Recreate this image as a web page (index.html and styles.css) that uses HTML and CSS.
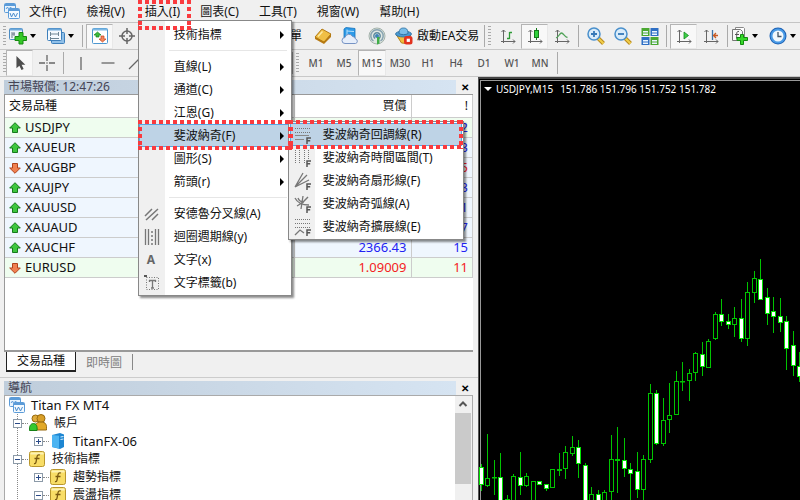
FILE: index.html
```
<!DOCTYPE html>
<html lang="zh-Hant">
<head>
<meta charset="utf-8">
<title>Titan FX MT4</title>
<link rel="stylesheet" href="styles.css">
</head>
<body>
<svg class="defs" aria-hidden="true">
  <defs>
    <symbol id="app" viewBox="0 0 16 16">
      <rect x=".5" y=".5" width="11" height="9" rx="1" fill="#e8f3fd" stroke="#5b9bd8"/>
      <path d="M1 2h10" stroke="#5b9bd8" stroke-width="2"/>
      <path d="M2 6l1.500-2 1.500 3 1.500-3 1.500 2" fill="none" stroke="#5b9bd8"/>
      <rect x="4.500" y="5.500" width="11" height="10" rx="1" fill="#f4faff" stroke="#5b9bd8"/>
      <path d="M5 7h10" stroke="#5b9bd8" stroke-width="2"/>
      <path d="M6 10l1.500 4 2-4 2 4 2-4" fill="none" stroke="#4a8ccc"/>
    </symbol>
    <symbol id="newchart" viewBox="0 0 18 18">
      <rect x=".5" y="1.500" width="13" height="11" rx="1" fill="#eef6fd" stroke="#4d8dc4"/>
      <path d="M1 2.500h12" stroke="#6fa9da" stroke-width="2"/>
      <path d="M3 11V5M3 7h3M5 5v4" stroke="#6d7d8c" fill="none"/>
      <path d="M10 5.500h4v4h3.500v4H14v3.500h-4v-3.500H6v-4h4z" fill="#35c828" stroke="#158a10"/>
    </symbol>
    <symbol id="profiles" viewBox="0 0 18 18">
      <rect x="4.500" y="5.500" width="13" height="11" rx="1" fill="#8fbfe8" stroke="#3d7fbb"/>
      <rect x=".5" y="1.500" width="14" height="12" rx="1" fill="#f4f9fe" stroke="#3d7fbb"/>
      <path d="M1 2.500h13" stroke="#6fa9da" stroke-width="2"/>
      <path d="M3.500 5v4M3.500 7h8M11.500 5v4M3 11.500h9M3.500 10v3" stroke="#6d8494" fill="none"/>
    </symbol>
    <symbol id="market" viewBox="0 0 16 16">
      <rect x=".5" y=".5" width="15" height="15" rx="1" fill="#fff" stroke="#4d97d0"/>
      <path d="M1 1.500h14" stroke="#7db8e4" stroke-width="2"/>
      <path d="M5.500 4L9 7H7v2H4V7H2z" fill="#3cb93a" stroke="#15841a" stroke-width=".7"/>
      <path d="M10.500 14L7 11h2V8h3v3h2z" fill="#f4875a" stroke="#c4411a" stroke-width=".7"/>
    </symbol>
    <symbol id="cross" viewBox="0 0 16 16">
      <circle cx="8" cy="8" r="5" fill="none" stroke="#666" stroke-width="1.500"/>
      <path d="M8 0v6M8 10v6M0 8h6M10 8h6" stroke="#666" stroke-width="1.500"/>
    </symbol>
    <symbol id="gold" viewBox="0 0 18 18">
      <path d="M1 10l7-8 9 5v3l-7 7-9-5z" fill="#b87a12"/>
      <path d="M1 10l7-8 9 5-7 8z" fill="#f0bf45" stroke="#a8700e" stroke-width=".8"/>
      <path d="M4 9.500L8.500 4.500" stroke="#fdeaa5" stroke-width="1.500"/>
    </symbol>
    <symbol id="cloud" viewBox="0 0 18 18">
      <path d="M3 2l2-1.500 9 1V11H3z" fill="#2f9be8" stroke="#1573bd" stroke-width=".8"/>
      <path d="M6 2.500v8M6 4l7 .5" stroke="#b7e0fb"/>
      <path d="M4 16.500a3 3 0 010-6 4 4 0 017.500-1 3 3 0 013 2.500 2.300 2.300 0 010 4.500z" fill="#e6eefa" stroke="#7693c4"/>
    </symbol>
    <symbol id="signal" viewBox="0 0 18 18">
      <circle cx="9" cy="9" r="8" fill="#dfe7e2" stroke="#a4b2ab"/>
      <path d="M5.500 14a6.200 6.200 0 117 0" fill="none" stroke="#88a3b0" stroke-width="1.500"/>
      <path d="M7 11.500a3.200 3.200 0 114 0" fill="none" stroke="#5f8aa0" stroke-width="1.500"/>
      <circle cx="9" cy="9" r="2" fill="#3c82b8"/>
      <path d="M9 10h2.500v6.500L9 17.500z" fill="#3fae46"/>
    </symbol>
    <symbol id="ea" viewBox="0 0 18 18">
      <path d="M1.500 8h14l-3.500 8.500-5.500-.5z" fill="#f2bd3e" stroke="#b4821a"/>
      <ellipse cx="8.500" cy="7" rx="8" ry="3" fill="#4a9ad2" stroke="#27699c" stroke-width=".8"/>
      <path d="M4 6.500C4 2 6 1 8.500 1S13 2 13 6.500c-2 1.500-7 1.500-9 0z" fill="#79bde8" stroke="#27699c" stroke-width=".8"/>
      <rect x="9" y="9" width="8.500" height="8.500" rx="2.500" fill="#e2321e"/>
      <rect x="11.700" y="11.700" width="3.200" height="3.200" fill="#fff"/>
    </symbol>
    <symbol id="bars" viewBox="0 0 16 16">
      <path d="M3.500 2v13M1 13.500h14M1.500 4l2-2 2 2M13 11.500l2 2-2 2" fill="none" stroke="#666"/>
      <path d="M9.500 4v7M9.500 4.500H12M7 10.500h2.500" fill="none" stroke="#2d9a35" stroke-width="1.300"/>
    </symbol>
    <symbol id="candles" viewBox="0 0 16 16">
      <path d="M3.500 2v13M1 13.500h14M1.500 4l2-2 2 2M13 11.500l2 2-2 2" fill="none" stroke="#666"/>
      <path d="M9.500 0v12" stroke="#147a1a"/>
      <rect x="7.500" y="2.500" width="4" height="7" fill="#2fd23a" stroke="#147a1a"/>
    </symbol>
    <symbol id="line" viewBox="0 0 16 16">
      <path d="M3.500 2v13M1 13.500h14M1.500 4l2-2 2 2M13 11.500l2 2-2 2" fill="none" stroke="#666"/>
      <path d="M2 10c3-1 3.500-5 5.500-5s3 4 6 4.500" fill="none" stroke="#4fa257" stroke-width="1.300"/>
    </symbol>
    <symbol id="zoomin" viewBox="0 0 18 18">
      <path d="M11 11l5.500 5.500" stroke="#b88a20" stroke-width="4"/><path d="M11 11l5.500 5.500" stroke="#f2cf4a" stroke-width="2"/>
      <circle cx="7" cy="7" r="6" fill="#d9ecfa" stroke="#4a90cc" stroke-width="1.500"/>
      <path d="M4 7h6M7 4v6" stroke="#3579b8" stroke-width="1.800"/>
    </symbol>
    <symbol id="zoomout" viewBox="0 0 18 18">
      <path d="M11 11l5.500 5.500" stroke="#b88a20" stroke-width="4"/><path d="M11 11l5.500 5.500" stroke="#f2cf4a" stroke-width="2"/>
      <circle cx="7" cy="7" r="6" fill="#d9ecfa" stroke="#4a90cc" stroke-width="1.500"/>
      <path d="M4 7h6" stroke="#3579b8" stroke-width="1.800"/>
    </symbol>
    <symbol id="tile" viewBox="0 0 18 18">
      <path d="M.5 1h8v8h-8z" fill="#4ba832"/><path d="M9.500 1h8v8h-8z" fill="#2f6fc4"/>
      <path d="M.5 10h8v8h-8z" fill="#2f6fc4"/><path d="M9.500 10h8v8h-8z" fill="#4ba832"/>
      <path d="M2 4h5v1.500H2zM2 6.500h5V8H2zM11 4h5v1.500h-5zM11 6.500h5V8h-5zM2 13h5v1.500H2zM2 15.500h5V17H2zM11 13h5v1.500h-5zM11 15.500h5V17h-5z" fill="#eaf4ff"/>
    </symbol>
    <symbol id="scroll" viewBox="0 0 16 16">
      <path d="M3.500 2v13M1 13.500h14M1.500 4l2-2 2 2M13 11.500l2 2-2 2" fill="none" stroke="#666"/>
      <path d="M8 4l4.500 3.500L8 11z" fill="#3ccf46" stroke="#148a1e" stroke-width=".8"/>
    </symbol>
    <symbol id="shift" viewBox="0 0 16 16">
      <path d="M3.500 2v13M1 13.500h14M1.500 4l2-2 2 2M13 11.500l2 2-2 2" fill="none" stroke="#666"/>
      <path d="M9.500 2v10" stroke="#3b72a8" stroke-width="1.300"/>
      <path d="M15 7.500h-4M13 5l-2.500 2.500L13 10" fill="none" stroke="#c85a22" stroke-width="1.300"/>
    </symbol>
    <symbol id="template" viewBox="0 0 18 18">
      <path d="M4.500 3.500V.5h8l1 1v11h-3" fill="#fff" stroke="#888"/>
      <path d="M1.500 2.500h8l2 2v9h-10z" fill="#f8f8f8" stroke="#777"/>
      <path d="M8 4.500c-3-.5-2 2-2.500 7M4 7.500h4" stroke="#555" fill="none"/>
      <path d="M9.500 7.500h3v3h4v3h-4v4h-3v-4h-3.500v-3h3.500z" fill="#35d828" stroke="#128a10"/>
    </symbol>
    <symbol id="clock" viewBox="0 0 18 18">
      <circle cx="9" cy="9" r="8.500" fill="#1d62b5"/><circle cx="9" cy="9" r="7.500" fill="#4a9be6"/>
      <circle cx="9" cy="9" r="5.500" fill="#f2f8fd"/>
      <path d="M9 5v4.500h3.500" fill="none" stroke="#456" stroke-width="1.300"/>
    </symbol>
    <symbol id="pointer" viewBox="0 0 16 18">
      <path d="M4 1v14l3.300-3 2.400 5 2.400-1.200L9.800 11H14z" fill="#4d4d4d"/>
    </symbol>
    <symbol id="crosshair" viewBox="0 0 16 16">
      <path d="M8 0v6M8 10v6M0 8h6M10 8h6" stroke="#666" stroke-width="1.300"/><circle cx="8" cy="8" r=".8" fill="#666"/>
    </symbol>
    <symbol id="vline" viewBox="0 0 16 16"><path d="M8 2v13" stroke="#666" stroke-width="1.300"/></symbol>
    <symbol id="hline" viewBox="0 0 16 16"><path d="M1.500 8h13" stroke="#666" stroke-width="1.300"/></symbol>
    <symbol id="tline" viewBox="0 0 16 16"><path d="M2 14L14 2" stroke="#666" stroke-width="1.300"/></symbol>
    <symbol id="up" viewBox="0 0 12 12">
      <path d="M6 .7L11.300 6H8.500v4.500h-5V6H.7z" fill="#3fc63f" stroke="#167a1c"/>
    </symbol>
    <symbol id="down" viewBox="0 0 12 12">
      <path d="M6 11.300L.7 6h2.800V1.500h5V6h2.800z" fill="#f08050" stroke="#b0431c"/>
    </symbol>
    <symbol id="pitchfork" viewBox="0 0 16 16"><path d="M1 10L8 3M2 14L14 3M8 14l6-6" stroke="#777" stroke-width="1.500"/></symbol>
    <symbol id="cycle" viewBox="0 0 16 16">
      <path d="M1.500 0v16M4.500 0v16M11.500 0v16M14.500 0v16" stroke="#777" stroke-width="1.300"/><path d="M8 2v14" stroke="#777" stroke-width="1.500" stroke-dasharray="2 2"/>
    </symbol>
    <symbol id="label" viewBox="0 0 16 16">
      <rect x="2.500" y="2.500" width="12" height="12" fill="none" stroke="#777" stroke-dasharray="1 1.500"/>
      <path d="M5 5.500h7M8.500 5.500V13M7 13h3M5.500 5v2M11.500 5v2" stroke="#777" stroke-width="1.300"/><path d="M0 1h3" stroke="#555" stroke-width="2"/>
    </symbol>
    <symbol id="eff" viewBox="0 0 6 7"><path d="M1 7V1h4M1 3.800h3.200" fill="none" stroke="#555" stroke-width="1.500"/></symbol>
    <symbol id="fretr" viewBox="0 0 18 18">
      <path d="M1 2.500h15M1 6.500h15" stroke="#777" stroke-dasharray="1 1"/><path d="M1 9.500h14M1 13.500h9" stroke="#888"/>
      <use href="#eff" x="12" y="11" width="6" height="7"/>
    </symbol>
    <symbol id="ftime" viewBox="0 0 18 18">
      <path d="M1.500 1v13M5.500 1v13M10.500 1v13M14.500 1v9" stroke="#777" stroke-dasharray="1 1"/>
      <use href="#eff" x="12" y="11" width="6" height="7"/>
    </symbol>
    <symbol id="ffan" viewBox="0 0 18 18">
      <path d="M1 15L9 1M1 15L13 3M1 15L15 8" stroke="#777" stroke-width="1.300"/>
      <use href="#eff" x="12" y="11" width="6" height="7"/>
    </symbol>
    <symbol id="farc" viewBox="0 0 18 18">
      <path d="M1 3c3 6 9 7 14 7M4 3c1 3 3 4 6 4M3 11c4-2 7-4 11-9M9 1L7 14" fill="none" stroke="#777" stroke-width="1.300"/>
      <use href="#eff" x="12" y="11" width="6" height="7"/>
    </symbol>
    <symbol id="fexp" viewBox="0 0 18 18">
      <path d="M1 1.500h16M1 5.500h16M1 9.500h16" stroke="#777" stroke-dasharray="1 1"/><path d="M1 17l5-5 4 3" fill="none" stroke="#777" stroke-width="1.300"/>
      <use href="#eff" x="12" y="11" width="6" height="7"/>
    </symbol>
    <symbol id="users" viewBox="0 0 18 18">
      <circle cx="6.500" cy="4.500" r="3.500" fill="#e0ac3c" stroke="#96690f"/>
      <circle cx="12" cy="4.500" r="4" fill="#d99f28" stroke="#96690f"/>
      <path d="M6 16c-1-5 1-8 6-8s6 3 5.500 8z" fill="#e2a928" stroke="#96690f"/>
      <path d="M.5 16.500c-.5-4 1-7 4-7s4 3 3.500 7z" fill="#35c82e" stroke="#158015"/>
    </symbol>
    <symbol id="server" viewBox="0 0 16 16">
      <path d="M2 2l8-2 4 1.500V14l-4 2-8-2z" fill="#1d86d2"/><path d="M2 2l7 .8V15.500L2 14z" fill="#4cb4f2"/>
      <path d="M10.500 4l3-.5M10.500 6.500l3-.5" stroke="#d8f0ff"/>
    </symbol>
    <symbol id="func" viewBox="0 0 16 16">
      <rect x=".5" y=".5" width="15" height="15" rx="2" fill="#f8dd66" stroke="#b8962c"/>
      <path d="M1.500 2.500h13" stroke="#fdf2b4" stroke-width="2"/>
      <path d="M11 4c-3-1-3 1.500-3.500 4.500S7 13 5 12.500M5.500 7.500h5" fill="none" stroke="#7a5a10" stroke-width="1.300"/>
    </symbol>
  </defs>
</svg>

<nav class="menubar">
  <svg class="i16"><use href="#app"/></svg>
  <ul class="menus">
    <li><button>文件(F)</button></li>
    <li><button>檢視(V)</button></li>
    <li class="open">
      <button>插入(I)</button>
      <span class="mark mark-title"></span>
      <ul class="popup main-popup">
        <li><button><span class="gut"></span>技術指標<i class="more"></i></button></li>
        <li class="rule"></li>
        <li><button><span class="gut"></span>直線(L)<i class="more"></i></button></li>
        <li><button><span class="gut"></span>通道(C)<i class="more"></i></button></li>
        <li><button><span class="gut"></span>江恩(G)<i class="more"></i></button></li>
        <li class="open">
          <button class="hot"><span class="gut"></span>斐波納奇(F)<i class="more"></i></button>
          <span class="mark mark-item"></span>
          <ul class="popup sub-popup">
            <li class="open"><button class="hot"><span class="gut"><svg class="i18"><use href="#fretr"/></svg></span>斐波納奇回調線(R)</button><span class="mark mark-sub"></span></li>
            <li><button><span class="gut"><svg class="i18"><use href="#ftime"/></svg></span>斐波納奇時間區間(T)</button></li>
            <li><button><span class="gut"><svg class="i18"><use href="#ffan"/></svg></span>斐波納奇扇形線(F)</button></li>
            <li><button><span class="gut"><svg class="i18"><use href="#farc"/></svg></span>斐波納奇弧線(A)</button></li>
            <li><button><span class="gut"><svg class="i18"><use href="#fexp"/></svg></span>斐波納奇擴展線(E)</button></li>
          </ul>
        </li>
        <li><button><span class="gut"></span>圖形(S)<i class="more"></i></button></li>
        <li><button><span class="gut"></span>箭頭(r)<i class="more"></i></button></li>
        <li class="rule"></li>
        <li><button><span class="gut"><svg class="i16"><use href="#pitchfork"/></svg></span>安德魯分叉線(A)</button></li>
        <li><button><span class="gut"><svg class="i16"><use href="#cycle"/></svg></span>迴圈週期線(y)</button></li>
        <li><button><span class="gut"><b>A</b></span>文字(x)</button></li>
        <li><button><span class="gut"><svg class="i16"><use href="#label"/></svg></span>文字標籤(b)</button></li>
      </ul>
    </li>
    <li><button>圖表(C)</button></li>
    <li><button>工具(T)</button></li>
    <li><button>視窗(W)</button></li>
    <li><button>幫助(H)</button></li>
  </ul>
</nav>

<div class="bar main-tools">
  <i class="grip"></i>
  <button class="drop" aria-label="新圖表"><svg class="i18"><use href="#newchart"/></svg><i class="caret"></i></button>
  <button class="drop" aria-label="配置"><svg class="i18"><use href="#profiles"/></svg><i class="caret"></i></button>
  <i class="sep"></i>
  <div class="windows">
    <button class="tool on" aria-label="市場報價"><svg class="i16"><use href="#market"/></svg></button>
    <button class="tool" aria-label="十字"><svg class="i16"><use href="#cross"/></svg></button>
    <button class="order">新訂單</button>
  </div>
  <button class="tool" aria-label="編輯器"><svg class="i18"><use href="#gold"/></svg></button>
  <button class="tool" aria-label="雲端"><svg class="i18"><use href="#cloud"/></svg></button>
  <button class="tool" aria-label="訊號"><svg class="i18"><use href="#signal"/></svg></button>
  <button class="ea"><svg class="i18"><use href="#ea"/></svg>啟動EA交易</button>
  <i class="sep"></i>
  <i class="grip"></i>
  <button class="tool" aria-label="柱狀圖"><svg class="i16"><use href="#bars"/></svg></button>
  <button class="tool on" aria-label="陰陽燭"><svg class="i16"><use href="#candles"/></svg></button>
  <button class="tool" aria-label="折線圖"><svg class="i16"><use href="#line"/></svg></button>
  <i class="sep"></i>
  <button class="tool" aria-label="放大"><svg class="i18"><use href="#zoomin"/></svg></button>
  <button class="tool" aria-label="縮小"><svg class="i18"><use href="#zoomout"/></svg></button>
  <button class="tool" aria-label="排列"><svg class="i18"><use href="#tile"/></svg></button>
  <i class="sep"></i>
  <button class="tool on" aria-label="自動捲動"><svg class="i16"><use href="#scroll"/></svg></button>
  <button class="tool" aria-label="圖表平移"><svg class="i16"><use href="#shift"/></svg></button>
  <i class="sep"></i>
  <button class="drop" aria-label="模板"><svg class="i18"><use href="#template"/></svg><i class="caret"></i></button>
  <button class="drop" aria-label="時間週期"><svg class="i18"><use href="#clock"/></svg><i class="caret"></i></button>
</div>

<div class="bar draw-tools">
  <div class="drawing">
    <i class="grip"></i>
    <button class="tool on" aria-label="游標"><svg class="i16"><use href="#pointer"/></svg></button>
    <button class="tool" aria-label="十字準線"><svg class="i16"><use href="#crosshair"/></svg></button>
    <i class="sep"></i>
    <button class="tool" aria-label="垂直線"><svg class="i16"><use href="#vline"/></svg></button>
    <button class="tool" aria-label="水平線"><svg class="i16"><use href="#hline"/></svg></button>
    <button class="tool" aria-label="趨勢線"><svg class="i16"><use href="#tline"/></svg></button>
  </div>
  <i class="sep"></i>
  <i class="grip"></i>
  <div class="frames">
    <button>M1</button><button>M5</button><button class="on">M15</button><button>M30</button><button>H1</button><button>H4</button><button>D1</button><button>W1</button><button>MN</button>
  </div>
  <i class="sep"></i>
</div>

<main>
  <aside>
    <section class="watch">
      <header><h2>市場報價: 12:47:26</h2><button aria-label="關閉">✕</button></header>
      <div class="quotes">
        <table>
          <thead><tr><th class="sym">交易品種</th><th class="bid">賣價</th><th class="ask">買價</th><th>!</th></tr></thead>
          <tbody>
            <tr class="alt up"><td><svg class="i12"><use href="#up"/></svg>USDJPY</td><td>151.782</td><td>151.794</td><td>12</td></tr>
            <tr class="up"><td><svg class="i12"><use href="#up"/></svg>XAUEUR</td><td>2180.11</td><td>2180.44</td><td>33</td></tr>
            <tr class="dn"><td><svg class="i12"><use href="#down"/></svg>XAUGBP</td><td>1866.32</td><td>1866.57</td><td>25</td></tr>
            <tr class="up"><td><svg class="i12"><use href="#up"/></svg>XAUJPY</td><td>361105</td><td>361138</td><td>33</td></tr>
            <tr class="up"><td><svg class="i12"><use href="#up"/></svg>XAUUSD</td><td>2379.12</td><td>2379.33</td><td>21</td></tr>
            <tr class="up"><td><svg class="i12"><use href="#up"/></svg>XAUAUD</td><td>3590.40</td><td>3590.67</td><td>27</td></tr>
            <tr class="up"><td><svg class="i12"><use href="#up"/></svg>XAUCHF</td><td>2366.28</td><td>2366.43</td><td>15</td></tr>
            <tr class="alt dn"><td><svg class="i12"><use href="#down"/></svg>EURUSD</td><td>1.08998</td><td>1.09009</td><td>11</td></tr>
          </tbody>
        </table>
      </div>
      <div class="tabs"><button class="current">交易品種</button><button>即時圖</button></div>
    </section>
    <section class="navigator">
      <header><h2>導航</h2><button aria-label="關閉">✕</button></header>
      <div class="treebox">
        <div class="tree">
          <div class="node root"><svg class="i16"><use href="#app"/></svg><span class="latin">Titan FX MT4</span></div>
          <ul>
            <li><div class="node"><i class="tog"></i><svg class="i18"><use href="#users"/></svg>帳戶</div>
              <ul><li><div class="node"><i class="tog plus"></i><svg class="i16"><use href="#server"/></svg><span class="latin">TitanFX-06</span></div></li></ul>
            </li>
            <li><div class="node"><i class="tog"></i><svg class="i16"><use href="#func"/></svg>技術指標</div>
              <ul>
                <li><div class="node"><i class="tog plus"></i><svg class="i16"><use href="#func"/></svg>趨勢指標</div></li>
                <li><div class="node"><i class="tog"></i><svg class="i16"><use href="#func"/></svg>震盪指標</div></li>
              </ul>
            </li>
          </ul>
        </div>
        <div class="scroll"><svg class="i16" viewBox="0 0 16 16"><path d="M4.500 10L8 6.500 11.500 10" fill="none" stroke="#555" stroke-width="2"/></svg><i></i></div>
      </div>
    </section>
  </aside>
  <section class="chart">
    <p><i class="tri"></i><span>USDJPY,M15</span><span>151.786 151.796 151.752 151.782</span></p>
    <svg id="plot" aria-label="USDJPY M15"></svg>
  </section>
</main>
<script src="chart.js"></script>
</body>
</html>
```
FILE: styles.css
```
* { box-sizing: border-box; }
html, body { height: 100%; }
body {
  margin: 0;
  display: flex;
  flex-direction: column;
  overflow: hidden;
  background: #f0f0f0;
  color: #111;
  font: 12px/18px "Noto Sans", "Noto Sans CJK TC", sans-serif;
}
ul { list-style: none; margin: 0; padding: 0; }
button { font: inherit; color: inherit; background: none; border: 0; padding: 0; margin: 0; white-space: nowrap; }
h2, p { margin: 0; font: inherit; }
svg { flex: none; display: block; }
.defs { position: absolute; width: 0; height: 0; }
.i12 { width: 12px; height: 12px; }
.i16 { width: 16px; height: 16px; }
.i18 { width: 18px; height: 18px; }

/* menu bar */
.menubar { flex: 0 0 23px; display: flex; align-items: center; padding-left: 4px; border-bottom: 1px solid #c4c4c4; }
.menus { display: flex; }
.menus > li > button { height: 22px; padding: 2px 10px 0; }
.menubar > .i16 { margin-right: -1px; }
.open { position: relative; }

.popup {
  position: absolute;
  z-index: 5;
  border: 1px solid #888;
  background: linear-gradient(90deg, #f0f0f0 26px, #fff 26px);
  box-shadow: 2px 2px 2px rgba(0, 0, 0, .45);
}
.main-popup { left: 3px; top: 20px; width: 154px; padding: 2px 0 1px; }
.sub-popup { left: 149px; top: -3px; width: 176px; padding: 1px; }
.popup button { display: flex; align-items: center; width: 100%; height: 23px; text-align: left; }
.popup .gut { width: 35px; flex: none; padding-left: 5px; color: #666; }
.sub-popup .gut { width: 33px; padding-left: 4px; }
.popup .gut b { padding-left: 3px; }
.rule { height: 9px; padding: 4px 4px 0 30px; }
.rule::before { content: ""; display: block; height: 1px; background: #e6e6e6; }
.more { margin-left: auto; margin-right: 7px; border: 4px solid transparent; border-left-color: #000; border-right: 0; }
.popup button.hot { background: #bed3e6; box-shadow: inset 0 0 0 1px #58a6e4; }

/* dotted highlight frames */
.mark {
  --h: repeating-linear-gradient(90deg, #fa3a3e 0 4px, transparent 4px 7px);
  --v: repeating-linear-gradient(180deg, #fa3a3e 0 4px, transparent 4px 7px);
  position: absolute;
  z-index: 6;
  pointer-events: none;
  background: var(--h) 0 0 / 100% 4px no-repeat, var(--h) 0 100% / 100% 4px no-repeat,
    var(--v) 0 0 / 4px 100% no-repeat, var(--v) 100% 0 / 4px 100% no-repeat;
}
.mark-title { left: 3px; top: 0; width: 53px; height: 30px; }
.mark-item { left: -1px; top: -4px; width: 154px; height: 30px; }
.mark-sub { left: -1px; top: -3px; width: 174px; height: 29px; }

/* tool bars */
.bar { display: flex; align-items: center; flex: 0 0 27px; padding-left: 3px; border-bottom: 1px solid #c8c8c8; }
.grip { flex: none; width: 3px; height: 21px; margin-right: 3px; background: repeating-linear-gradient(#aaa 0 1px, #f0f0f0 1px 3px); }
.sep { flex: none; width: 1px; height: 22px; margin: 0 3px; background: #aaa; }
.tool { flex: none; display: grid; place-items: center; width: 27px; height: 25px; }
.on { background: #f8f8f8; border: 1px solid #b4b4b4; border-right-color: #e8e8e8; border-bottom-color: #e8e8e8; }
.drop { display: flex; align-items: center; gap: 3px; width: 32px; flex: none; }
.drop + .drop { margin-left: 6px; }
.caret { border: 3px solid transparent; border-top: 4px solid #000; border-bottom: 0; }
.windows { flex: 0 0 223px; display: flex; align-items: center; }
.order { margin-left: auto; padding-right: 7px; }
.ea { display: flex; align-items: center; gap: 4px; padding: 0 2px 0 5px; }
.draw-tools .on { height: 26px; }
.drawing { flex: 0 0 286px; display: flex; align-items: center; }
.drawing .grip { margin-right: 0; }
.frames { display: flex; color: #555; font-size: 10px; font-weight: 500; }
.frames button { width: 28px; height: 25px; }

/* work area */
main { flex: 1; min-height: 0; display: flex; }
aside { flex: 0 0 478px; display: flex; flex-direction: column; padding: 3px 5px 0 4px; }
section header { display: flex; align-items: center; height: 14px; padding-right: 1px; }
section header h2 { flex: 1; padding-left: 4px; line-height: 14px; color: #445; background: linear-gradient(90deg, #bfcddb, #d6e4f2); }
section header button { width: 14px; margin-left: 2px; font-size: 10px; line-height: 14px; font-weight: bold; color: #000; }
.watch { flex: 0 0 293px; display: flex; flex-direction: column; }
.quotes { flex: 1; background: #fff; border: 1px solid #999; border-width: 1px 0 2px 1px; }
table { width: 100%; border-collapse: collapse; table-layout: fixed; }
th, td { height: 20px; padding: 0 4px; border: 1px solid #ccc; border-width: 0 1px 1px 0; text-align: right; font-weight: 400; line-height: 18px; }
th { height: 22px; }
.sym { width: 172px; }
.bid, .ask { width: 117px; }
th:first-child, td:first-child { text-align: left; color: #111; }
td { font-size: 13px; }
td .i12 { display: inline-block; vertical-align: -2px; margin-right: 4px; }
tbody tr { background: #eff6fe; }
tbody .alt { background: #effdef; }
.up { color: #2222f4; }
.dn { color: #f42222; }
.tabs { display: flex; height: 21px; padding-left: 2px; }
.tabs button { height: 20px; padding: 0 10px; color: #808080; }
.tabs button:last-child { border-right: 1px solid #888; height: 16px; margin-top: 2px; }
.tabs .current { background: #fff; color: #111; border: 1px solid #222; border-width: 0 1px 2px; }
.navigator { flex: 1; min-height: 0; display: flex; flex-direction: column; border-top: 1px solid #ccc; margin: 4px -5px 0 -4px; padding: 3px 5px 0 4px; }
.treebox { flex: 1; min-height: 0; display: flex; background: #fff; border: 1px solid #aaa; border-width: 1px 1px 0; }
.tree { flex: 1; overflow: hidden; }
.node { display: flex; align-items: center; height: 18px; gap: 7px; }
.root { padding-left: 4px; gap: 6px; }
.root + ul { padding-left: 8px; background: repeating-linear-gradient(#888 0 1px, transparent 1px 2px) 12px 0 / 1px 100% no-repeat; }
li ul { padding-left: 21px; }
.tog { width: 9px; height: 9px; border: 1px solid #8c9aa8; background: linear-gradient(#2a4a88, #2a4a88) 1px 3px / 5px 1px no-repeat #fff; position: relative; }
.tog::after { content: ""; position: absolute; left: 8px; top: 3px; width: 6px; border-top: 1px dotted #888; }
.plus { background: linear-gradient(#2a4a88, #2a4a88) 1px 3px / 5px 1px no-repeat, linear-gradient(#2a4a88, #2a4a88) 3px 1px / 1px 5px no-repeat #fff; }
.latin { font-size: 13px; }
.scroll { width: 17px; background: #f0f0f0; padding-right: 1px; }
.scroll i { display: block; height: 71px; margin-top: 1px; background: #cacaca; }

/* price chart */
.chart { flex: 1; min-width: 0; display: flex; flex-direction: column; background: #000; color: #fff; border-left: 1px solid #555; border-top: 2px solid #444; box-shadow: inset 1px 1px #000, inset 2px 2px #999; }
.chart p { display: flex; align-items: center; height: 20px; padding-left: 5px; font-size: 10px; line-height: 20px; }
.chart span { margin-right: 7px; white-space: nowrap; }
.tri { margin-right: 4px; border: 4px solid transparent; border-top-color: #fff; border-bottom: 0; }
#plot { flex: 1; width: 100%; min-height: 0; }
```
FILE: chart.js
```
// Each candle: high, body top, body bottom, low, falling (1) or rising (0); heights measured down the pane.
const candles = [
  [464,467,485,491,1],[434,478,486,487,0],[460,477,478,495,0],[453,477,502,502,1],[495,499,502,502,0],
  [474,476,502,502,0],[452,477,486,495,1],[473,476,486,487,0],[481,481,502,502,0],[481,481,485,485,1],
  [484,484,489,491,1],[469,469,488,488,0],[453,469,471,476,0],[446,452,469,479,0],[436,447,454,456,0],
  [440,447,464,478,1],[463,465,502,502,1],[487,494,502,502,0],[490,494,502,502,1],[490,492,502,502,0],
  [435,459,492,502,0],[427,459,461,493,0],[438,460,469,477,1],[463,469,474,502,1],[452,471,490,498,1],
  [455,459,490,502,0],[384,393,460,463,0],[390,393,444,445,1],[398,420,444,446,0],[383,415,420,433,0],
  [371,381,415,415,0],[362,381,382,391,0],[369,373,381,401,0],[352,353,373,381,0],[342,354,367,376,1],
  [339,341,368,368,0],[312,314,339,340,0],[299,314,322,326,1],[314,321,325,329,1],[307,318,325,337,0],
  [299,318,339,342,1],[282,292,339,346,0],[271,278,293,303,0],[259,279,300,300,1],[288,297,314,325,1],
  [297,311,317,333,1],[298,316,323,332,1],[316,321,349,370,1],[331,345,366,376,1],[352,366,377,382,1]
];
const NS = "http://www.w3.org/2000/svg";
const plot = document.getElementById("plot");
const TOP = 99, STEP = 6.5;
function add(name, attrs) {
  const el = document.createElementNS(NS, name);
  for (const key in attrs) el.setAttribute(key, attrs[key]);
  plot.appendChild(el);
}
candles.forEach(([high, top, bottom, low, falling], i) => {
  const x = Math.floor(3 + i * STEP) - 0.5;
  add("path", { d: `M${x} ${high - TOP}V${low - TOP}`, stroke: "#00c400" });
  add("rect", {
    x: x - 2, y: top - TOP + 0.5, width: 4, height: Math.max(bottom - top - 1, 0.5),
    fill: falling ? "#fff" : "#000", stroke: falling ? "#00e600" : "#00c400"
  });
});
```
